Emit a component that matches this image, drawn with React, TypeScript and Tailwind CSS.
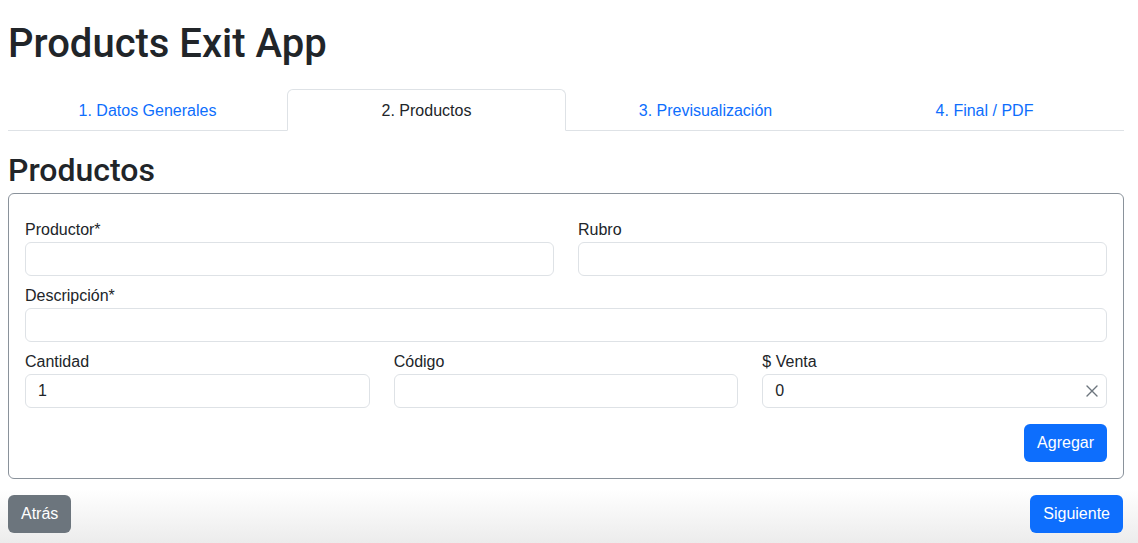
import React from "react";

const font = { fontFamily: '"Liberation Sans", Arial, sans-serif' };
const headFont = { fontFamily: 'Roboto, "Liberation Sans", Arial, sans-serif' };

function Field({ label, value, clear }: { label: string; value?: string; clear?: boolean }) {
  return (
    <div className="flex flex-col min-w-0 flex-1">
      <label className="text-[16px] leading-6 text-[#212529]">{label}</label>
      <div className="relative mb-2">
        <input
          readOnly
          value={value ?? ""}
          className="w-full h-[34px] border border-[#dee2e6] rounded-md px-3 text-[16px] text-[#212529] bg-white outline-none"
          style={font}
        />
        {clear && (
          <svg
            className="absolute right-[9px] top-[11px]"
            width="12"
            height="12"
            viewBox="0 0 12 12"
            fill="none"
            stroke="#6c757d"
            strokeWidth="1.4"
            strokeLinecap="round"
          >
            <path d="M1 1 L11 11 M11 1 L1 11" />
          </svg>
        )}
      </div>
    </div>
  );
}

export default function App() {
  const tabs = ["1. Datos Generales", "2. Productos", "3. Previsualización", "4. Final / PDF"];
  return (
    <div className="w-[1138px] h-[543px] overflow-hidden bg-white text-[#212529] flex flex-col" style={font}>
      <div className="px-2 flex-1">
        <h1 className="text-[40px] leading-[48px] font-medium mt-[20px] mb-0" style={headFont}>
          Products Exit App
        </h1>
        <ul className="flex border-b border-[#dee2e6] mt-[21px] w-[1116px]">
          {tabs.map((t, i) => (
            <li key={t} className="flex-1 -mb-px">
              <div
                className={
                  "text-center pt-[9px] pb-[7px] text-[16px] leading-6 border rounded-t-md " +
                  (i === 1
                    ? "border-[#dee2e6] border-b-white bg-white text-[#212529]"
                    : "border-transparent text-[#0d6efd]")
                }
              >
                {t}
              </div>
            </li>
          ))}
        </ul>
        <h2 className="text-[32px] leading-[38px] font-medium mt-[20px] mb-[4px]" style={headFont}>
          Productos
        </h2>
        <div className="w-[1116px] border border-[#8a929b] rounded-md px-4 pt-[24px] pb-4">
          <div className="flex gap-6">
            <Field label="Productor*" />
            <Field label="Rubro" />
          </div>
          <div className="flex">
            <Field label="Descripción*" />
          </div>
          <div className="flex gap-6">
            <Field label="Cantidad" value="1" />
            <Field label="Código" />
            <Field label="$ Venta" value="0" clear />
          </div>
          <div className="flex justify-end mt-2">
            <button className="h-[38px] px-[13px] rounded-md bg-[#0d6efd] text-white text-[16px]">Agregar</button>
          </div>
        </div>
      </div>
      <div className="h-[60px] bg-linear-to-b from-white from-10% to-[#ececec] flex items-start justify-between px-2 pt-[12px] w-[1138px]">
        <button className="h-[38px] px-[13px] rounded-md bg-[#6c757d] text-white text-[16px]">Atrás</button>
        <button className="h-[38px] px-[13px] rounded-md bg-[#0d6efd] text-white text-[16px] mr-[7px]">Siguiente</button>
      </div>
    </div>
  );
}
